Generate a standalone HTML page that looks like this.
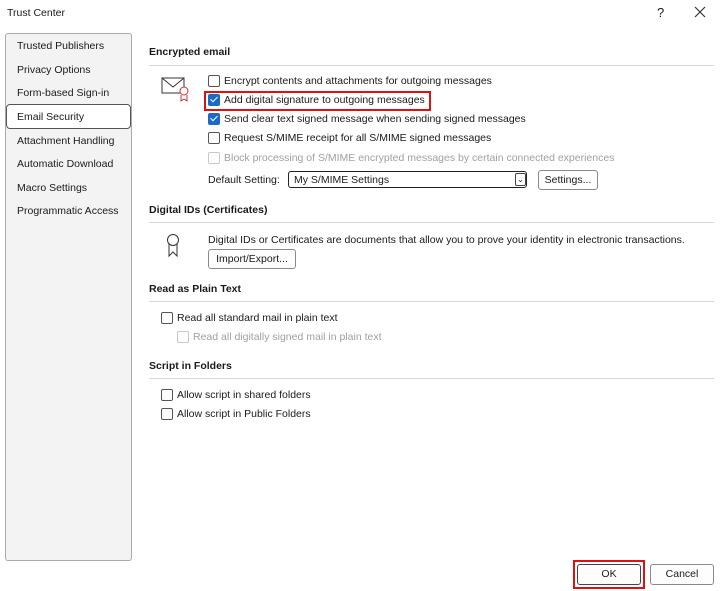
<!DOCTYPE html><html><head><style>
body{margin:0;width:720px;height:591px;background:#fff;font-family:"Liberation Sans",sans-serif;font-size:10.5px;color:#1a1a1a;position:relative;overflow:hidden}
.a{position:absolute;white-space:nowrap}
.cb{position:absolute;width:10px;height:10px;border:1px solid #555;border-radius:2px;background:#fff}
.ck{background:#1a6ac6;border-color:#1a6ac6}
.ck:after{content:"";position:absolute;left:3px;top:0px;width:3px;height:6px;border:solid #fff;border-width:0 1.5px 1.5px 0;transform:rotate(45deg)}
.dis{border-color:#c8c8c8}
.h{position:absolute;left:149px;font-weight:bold}
.ln{position:absolute;left:149px;width:565px;height:1px;background:#d8d8d8}
.btn{position:absolute;border:1px solid #8a8a8a;border-radius:3px;background:#fdfdfd;text-align:center;box-sizing:border-box}
.side div{position:absolute;left:17px}
</style></head><body>
<div class="a" style="left:7px;top:7px">Trust Center</div>
<div class="a" style="left:657px;top:5px;font-size:13px">?</div>
<svg class="a" style="left:694px;top:6px" width="12" height="12"><path d="M1 1L11 11M11 1L1 11" stroke="#333" stroke-width="1.2"/></svg>
<div style="position:absolute;left:5px;top:33px;width:125px;height:526px;border:1px solid #aaa;border-radius:3px;background:#f3f3f3"></div>
<div style="position:absolute;left:6px;top:104px;width:123px;height:23px;border:1px solid #555;border-radius:4px;background:#fff"></div>
<div class="side">
<div style="top:40px">Trusted Publishers</div>
<div style="top:64px">Privacy Options</div>
<div style="top:87px">Form-based Sign-in</div>
<div style="top:111px">Email Security</div>
<div style="top:135px">Attachment Handling</div>
<div style="top:158px">Automatic Download</div>
<div style="top:182px">Macro Settings</div>
<div style="top:205px">Programmatic Access</div>
</div>
<div class="h" style="top:46px">Encrypted email</div><div class="ln" style="top:65px"></div>
<svg class="a" style="left:161px;top:76px" width="30" height="26"><rect x="1" y="2" width="22" height="15" fill="none" stroke="#333"/><path d="M1 2 L12 11 L23 2" fill="none" stroke="#333"/><circle cx="23" cy="15" r="4" fill="#fff" stroke="#c33"/><path d="M20 19 v6 l3-2 l3 2 v-6" fill="none" stroke="#c33"/></svg>
<div class="cb" style="left:208px;top:75px"></div><div class="a" style="left:224px;top:75px">Encrypt contents and attachments for outgoing messages</div>
<div style="position:absolute;left:204px;top:91px;width:223px;height:16px;border:2px solid #e01010"></div>
<div class="cb ck" style="left:208px;top:94px"></div><div class="a" style="left:224px;top:94px">Add digital signature to outgoing messages</div>
<div class="cb ck" style="left:208px;top:113px"></div><div class="a" style="left:224px;top:113px">Send clear text signed message when sending signed messages</div>
<div class="cb" style="left:208px;top:132px"></div><div class="a" style="left:224px;top:132px">Request S/MIME receipt for all S/MIME signed messages</div>
<div class="cb dis" style="left:208px;top:152px"></div><div class="a" style="left:224px;top:152px;color:#a0a0a0">Block processing of S/MIME encrypted messages by certain connected experiences</div>
<div class="a" style="left:208px;top:174px">Default Setting:</div>
<div style="position:absolute;left:288px;top:171px;width:239px;height:17px;border:1px solid #222;border-radius:3px;box-sizing:border-box"></div>
<div class="a" style="left:294px;top:174px">My S/MIME Settings</div>
<div style="position:absolute;left:515px;top:173px;width:11px;height:13px;border:1px solid #444;border-radius:2px;box-sizing:border-box;font-size:8px;text-align:center;line-height:11px">⌄</div>
<div class="btn" style="left:538px;top:170px;width:60px;height:20px;line-height:18px">Settings...</div>
<div class="h" style="top:204px">Digital IDs (Certificates)</div><div class="ln" style="top:222px"></div>
<svg class="a" style="left:166px;top:233px" width="16" height="26"><circle cx="7" cy="7" r="5.5" fill="none" stroke="#333"/><path d="M3 11 v12 l4-4 l4 4 v-12" fill="none" stroke="#333"/></svg>
<div class="a" style="left:208px;top:234px">Digital IDs or Certificates are documents that allow you to prove your identity in electronic transactions.</div>
<div class="btn" style="left:208px;top:249px;width:88px;height:20px;line-height:18px">Import/Export...</div>
<div class="h" style="top:283px">Read as Plain Text</div><div class="ln" style="top:301px"></div>
<div class="cb" style="left:161px;top:312px"></div><div class="a" style="left:177px;top:312px">Read all standard mail in plain text</div>
<div class="cb dis" style="left:177px;top:331px"></div><div class="a" style="left:193px;top:331px;color:#a0a0a0">Read all digitally signed mail in plain text</div>
<div class="h" style="top:360px">Script in Folders</div><div class="ln" style="top:378px"></div>
<div class="cb" style="left:161px;top:389px"></div><div class="a" style="left:177px;top:389px">Allow script in shared folders</div>
<div class="cb" style="left:161px;top:408px"></div><div class="a" style="left:177px;top:408px">Allow script in Public Folders</div>
<div style="position:absolute;left:573px;top:560px;width:68px;height:25px;border:2px solid #e01010"></div>
<div class="btn" style="left:577px;top:564px;width:64px;height:21px;line-height:19px;border-color:#444">OK</div>
<div class="btn" style="left:650px;top:564px;width:64px;height:21px;line-height:19px">Cancel</div>
</body></html>
